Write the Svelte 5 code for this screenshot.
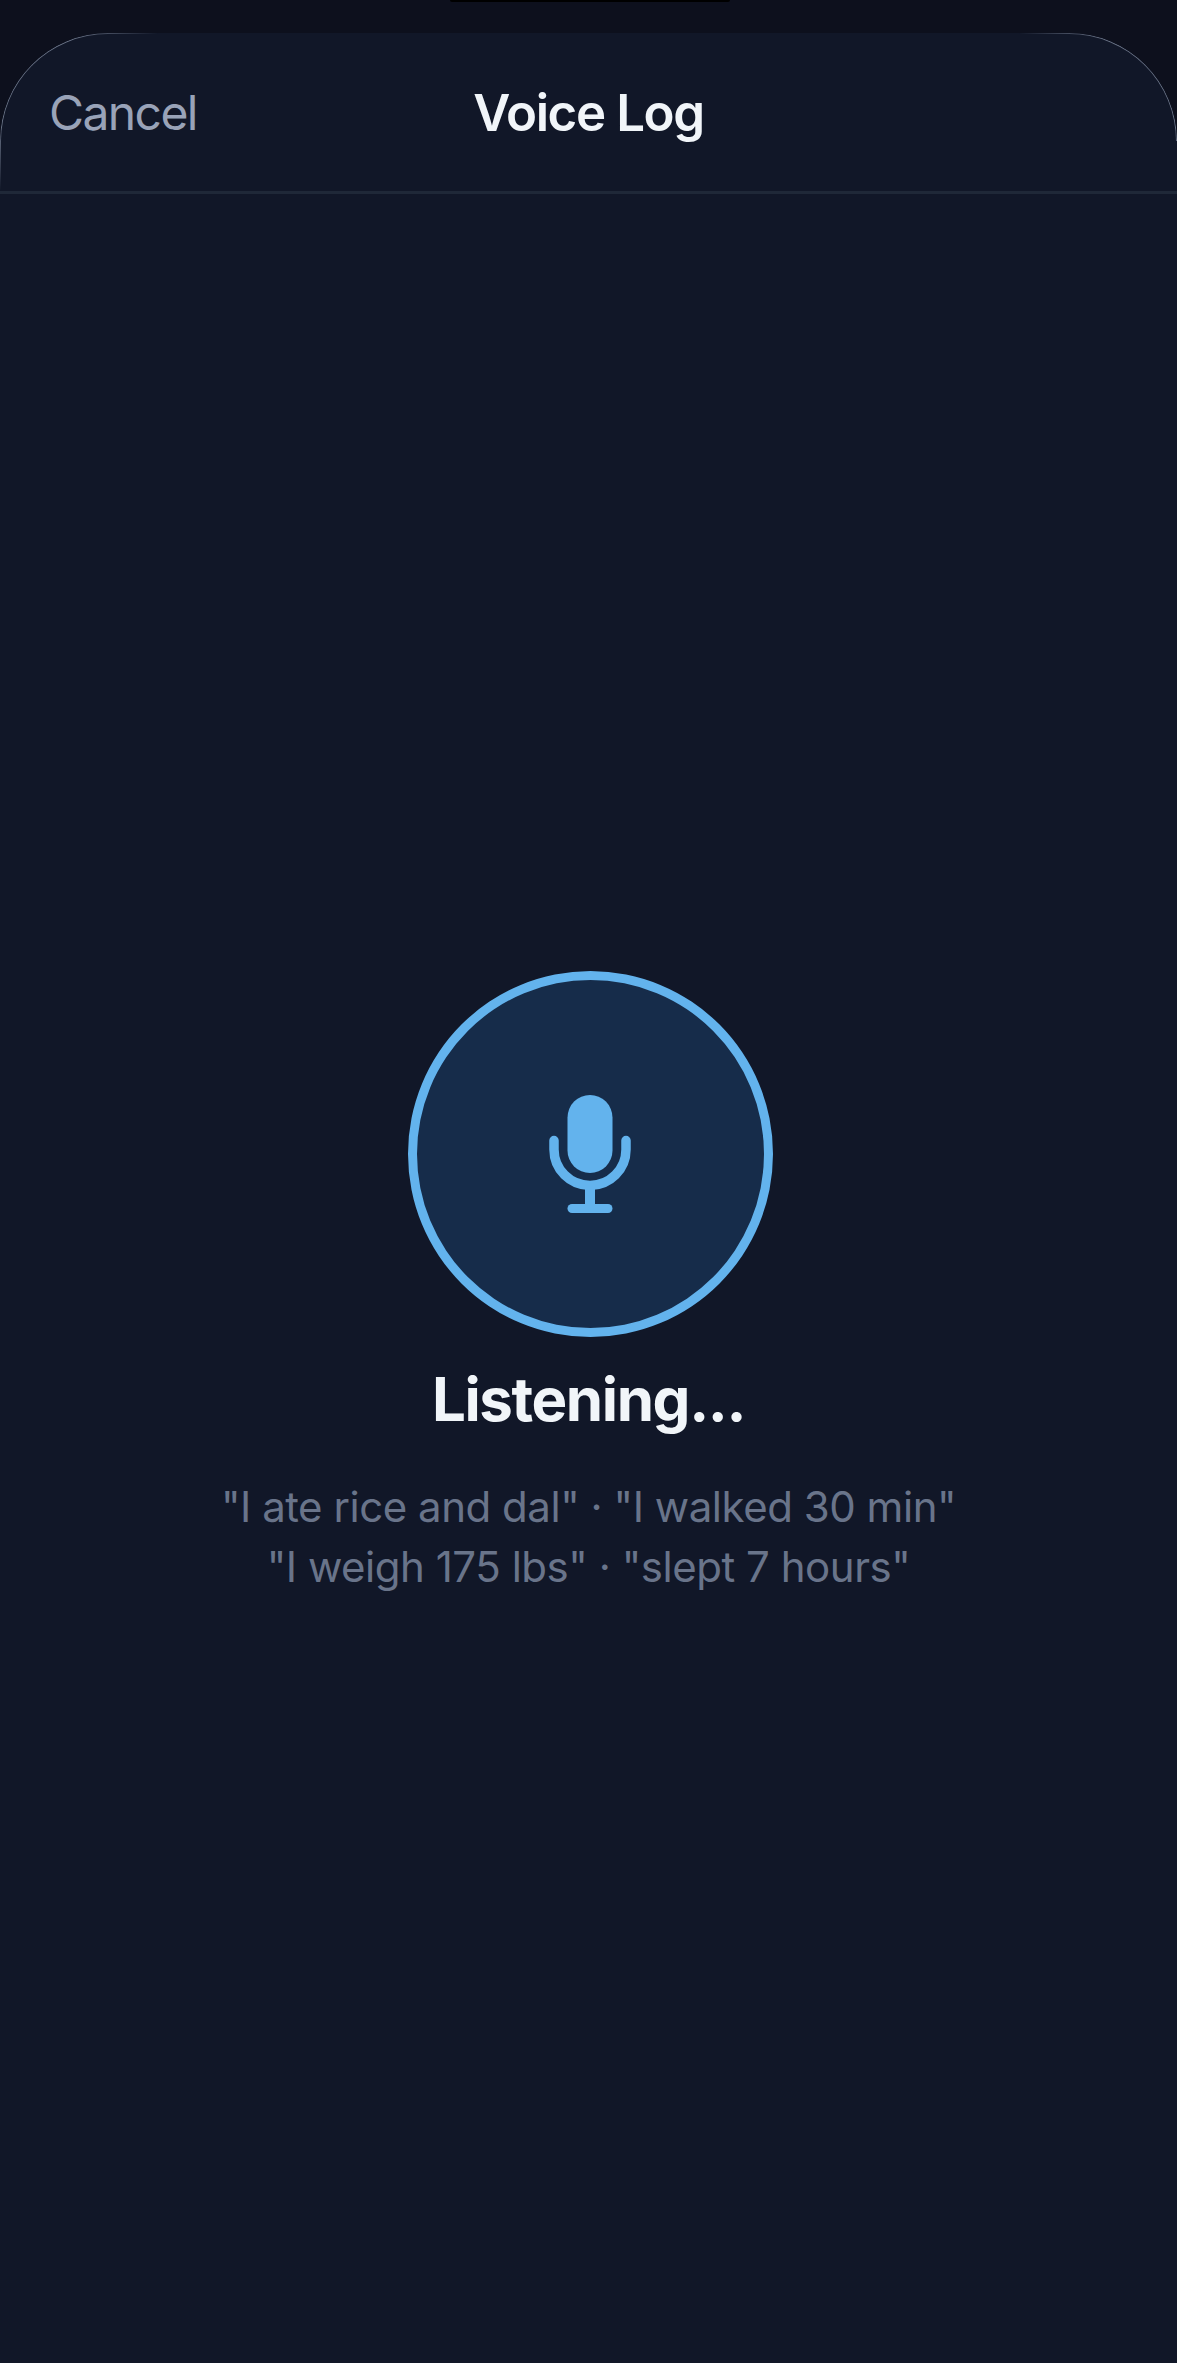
<script lang="ts">
    const hints = [
        '"I ate rice and dal" · "I walked 30 min"',
        '"I weigh 175 lbs" · "slept 7 hours"',
    ];
</script>

<div class="screen">
    <div class="notch"></div>

    <div class="sheet">
        <!-- Hairline that only shows round the top corners -->
        <span class="corner corner-left"></span>
        <span class="corner corner-right"></span>

        <header class="sheet-header">
            <span class="cancel">Cancel</span>
            <span class="title">Voice Log</span>
        </header>

        <main class="listen">
            <div class="mic-ring">
                <svg class="mic" viewBox="0 0 82 118" width="82" height="118" aria-hidden="true">
                    <rect x="18.5" y="0" width="45" height="78" rx="22.5" fill="#63b3ed" />
                    <path
                        d="M5 45.5v9a36 36 0 0 0 72 0v-9"
                        fill="none"
                        stroke="#63b3ed"
                        stroke-width="9.5"
                        stroke-linecap="round"
                    />
                    <path d="M41 90v23" fill="none" stroke="#63b3ed" stroke-width="10" />
                    <path d="M23 113.5h36" fill="none" stroke="#63b3ed" stroke-width="9" stroke-linecap="round" />
                </svg>
            </div>
            <h1 class="status">Listening...</h1>
            <div class="hints">
                {#each hints as line}
                    <p>{line}</p>
                {/each}
            </div>
        </main>
    </div>
</div>

<style>
    :global(body) {
        margin: 0;
        background: #0d101d;
    }

    .screen {
        position: relative;
        display: flex;
        flex-direction: column;
        height: 2363px;
        padding-top: 33px;
        box-sizing: border-box;
        overflow: hidden;
        background: #0d101d;
        font-family: Inter, "Liberation Sans", sans-serif;
    }

    .notch {
        position: absolute;
        top: 0;
        left: 450px;
        width: 280px;
        height: 2px;
        border-radius: 0 0 6px 6px;
        background: #000;
    }

    .sheet {
        position: relative;
        flex: 1;
        display: flex;
        flex-direction: column;
        border-radius: 108px 108px 0 0;
        background: #111728;
    }

    .corner {
        position: absolute;
        top: 0;
        width: 158px;
        box-sizing: border-box;
        border-top: 1.5px solid #6a7386;
        pointer-events: none;
    }

    .corner-left {
        left: 0;
        height: 158px;
        border-left: 1.5px solid #6a7386;
        border-top-left-radius: 108px;
        mask-image: linear-gradient(90deg, #000 45%, transparent 100%),
            linear-gradient(180deg, #000 60%, transparent 100%);
        mask-composite: intersect;
    }

    .corner-right {
        right: 0;
        height: 108px;
        border-right: 1.5px solid #6a7386;
        border-top-right-radius: 108px;
        mask-image: linear-gradient(270deg, #000 45%, transparent 100%);
    }

    .sheet-header {
        position: relative;
        display: flex;
        align-items: center;
        justify-content: center;
        height: 158px;
        border-bottom: 3px solid #1f2838;
    }

    .cancel {
        position: absolute;
        left: 49px;
        font-size: 48px;
        letter-spacing: -1.6px;
        color: #99a3b8;
    }

    .title {
        font-size: 51px;
        font-weight: 600;
        letter-spacing: -1.4px;
        color: #f1f5f9;
    }

    .listen {
        flex: 1;
        display: flex;
        flex-direction: column;
        align-items: center;
        padding-top: 777px;
    }

    .mic-ring {
        display: flex;
        align-items: center;
        justify-content: center;
        width: 365px;
        height: 366px;
        margin-left: 3px;
        box-sizing: border-box;
        border: 9px solid #63b3ed;
        border-radius: 50%;
        background: #162c4a;
    }

    .status {
        margin: 26px 0 0;
        font-size: 60px;
        line-height: 72px;
        font-weight: 700;
        letter-spacing: -1.4px;
        color: #f1f5f9;
    }

    .hints {
        margin-top: 42px;
        text-align: center;
        font-size: 42px;
        line-height: 60px;
        letter-spacing: -0.47px;
        color: #69748a;
    }

    .hints p {
        margin: 0;
    }
</style>
